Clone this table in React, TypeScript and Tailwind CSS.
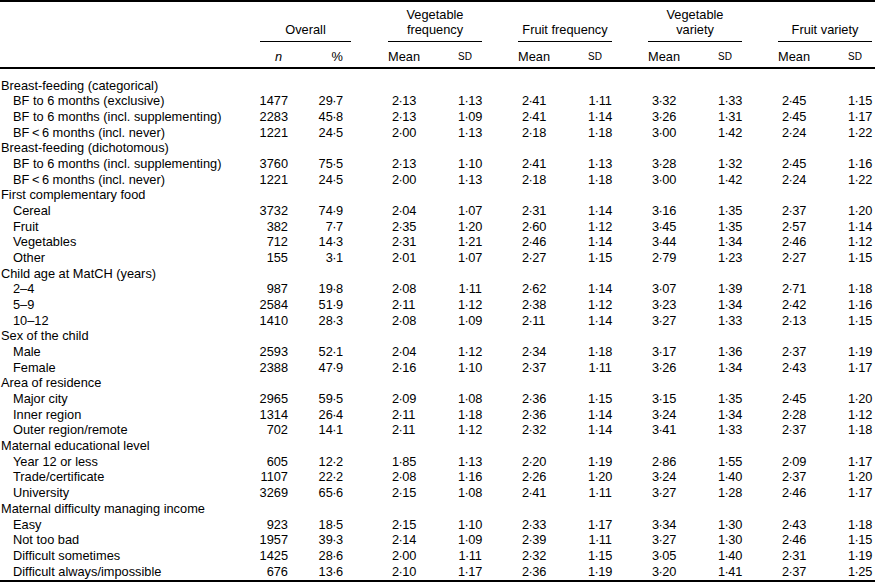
const rows: [string, string | null][] = [
  ["Breast-feeding (categorical)", null],
  ["BF to 6 months (exclusive)", "1477 29·7 2·13 1·13 2·41 1·11 3·32 1·33 2·45 1·15"],
  ["BF to 6 months (incl. supplementing)", "2283 45·8 2·13 1·09 2·41 1·14 3·26 1·31 2·45 1·17"],
  ["BF\u2009<\u20096 months (incl. never)", "1221 24·5 2·00 1·13 2·18 1·18 3·00 1·42 2·24 1·22"],
  ["Breast-feeding (dichotomous)", null],
  ["BF to 6 months (incl. supplementing)", "3760 75·5 2·13 1·10 2·41 1·13 3·28 1·32 2·45 1·16"],
  ["BF\u2009<\u20096 months (incl. never)", "1221 24·5 2·00 1·13 2·18 1·18 3·00 1·42 2·24 1·22"],
  ["First complementary food", null],
  ["Cereal", "3732 74·9 2·04 1·07 2·31 1·14 3·16 1·35 2·37 1·20"],
  ["Fruit", "382 7·7 2·35 1·20 2·60 1·12 3·45 1·35 2·57 1·14"],
  ["Vegetables", "712 14·3 2·31 1·21 2·46 1·14 3·44 1·34 2·46 1·12"],
  ["Other", "155 3·1 2·01 1·07 2·27 1·15 2·79 1·23 2·27 1·15"],
  ["Child age at MatCH (years)", null],
  ["2–4", "987 19·8 2·08 1·11 2·62 1·14 3·07 1·39 2·71 1·18"],
  ["5–9", "2584 51·9 2·11 1·12 2·38 1·12 3·23 1·34 2·42 1·16"],
  ["10–12", "1410 28·3 2·08 1·09 2·11 1·14 3·27 1·33 2·13 1·15"],
  ["Sex of the child", null],
  ["Male", "2593 52·1 2·04 1·12 2·34 1·18 3·17 1·36 2·37 1·19"],
  ["Female", "2388 47·9 2·16 1·10 2·37 1·11 3·26 1·34 2·43 1·17"],
  ["Area of residence", null],
  ["Major city", "2965 59·5 2·09 1·08 2·36 1·15 3·15 1·35 2·45 1·20"],
  ["Inner region", "1314 26·4 2·11 1·18 2·36 1·14 3·24 1·34 2·28 1·12"],
  ["Outer region/remote", "702 14·1 2·11 1·12 2·32 1·14 3·41 1·33 2·37 1·18"],
  ["Maternal educational level", null],
  ["Year 12 or less", "605 12·2 1·85 1·13 2·20 1·19 2·86 1·55 2·09 1·17"],
  ["Trade/certificate", "1107 22·2 2·08 1·16 2·26 1·20 3·24 1·40 2·37 1·20"],
  ["University", "3269 65·6 2·15 1·08 2·41 1·11 3·27 1·28 2·46 1·17"],
  ["Maternal difficulty managing income", null],
  ["Easy", "923 18·5 2·15 1·10 2·33 1·17 3·34 1·30 2·43 1·18"],
  ["Not too bad", "1957 39·3 2·14 1·09 2·39 1·11 3·27 1·30 2·46 1·15"],
  ["Difficult sometimes", "1425 28·6 2·00 1·11 2·32 1·15 3·05 1·40 2·31 1·19"],
  ["Difficult always/impossible", "676 13·6 2·10 1·17 2·36 1·19 3·20 1·41 2·37 1·25"],
];

const groups = [
  { title: ["Vegetable", "frequency"], gap: "w-[45px]" },
  { title: ["Fruit frequency"], gap: "w-[36px]" },
  { title: ["Vegetable", "variety"], gap: "w-[36px]" },
  { title: ["Fruit variety"], gap: "w-[36px]" },
];

// the middle dot sits tight against the digits in the source
function Num({ value }: { value: string }) {
  const [a, b] = value.split("·");
  if (b === undefined) return <>{a}</>;
  return (
    <>
      {a}
      <span className="mx-[-0.6px]">·</span>
      {b}
    </>
  );
}

function GroupTitle({ lines }: { lines: string[] }) {
  return (
    <div className="flex h-full w-[94px] flex-col justify-end border-b border-black pb-[3px] text-center">
      {lines.map((l) => (
        <div key={l}>{l}</div>
      ))}
    </div>
  );
}

export default function App() {
  return (
    <div
      className="h-[585px] w-[875px] overflow-hidden bg-white text-[12.8px] leading-[15.68px] text-black"
      style={{ fontFamily: '"Liberation Sans", Arial, sans-serif' }}
    >
      <div className="border-b-2 border-t-2 border-black">
        <div className="flex h-[40px] items-end">
          <div className="w-[260px]" />
          <div className="flex h-full w-[91px] flex-col justify-end border-b border-black pb-[3px] text-center">
            Overall
          </div>
          {groups.map((g, i) => (
            <div key={i} className="flex h-full">
              <div className={i === 0 ? "w-[37px]" : g.gap} />
              <GroupTitle lines={g.title} />
            </div>
          ))}
        </div>
        <div className="flex pb-[2px] pt-[7px]">
          <div className="w-[250px]" />
          <div className="w-[38px] pr-[6px] text-right italic">n</div>
          <div className="w-[55px] text-right">%</div>
          {groups.map((g, i) => (
            <div key={i} className="flex">
              <div className={g.gap} />
              <div className="w-[70px]">Mean</div>
              <div className="w-[24px] text-[10px]">SD</div>
            </div>
          ))}
        </div>
      </div>

      <div className="border-b-2 border-black pb-[1px] pt-[9px]">
        {rows.map(([label, data], r) => {
          if (!data) {
            return (
              <div key={r} className="h-[15.68px] pl-[1px]">
                {label}
              </div>
            );
          }
          const v = data.split(" ");
          return (
            <div key={r} className="flex h-[15.68px]">
              <div className="w-[250px] pl-[13px]">{label}</div>
              <div className="w-[38px] text-right">{v[0]}</div>
              <div className="w-[55px] text-right">
                <Num value={v[1]} />
              </div>
              {groups.map((g, i) => (
                <div key={i} className="flex">
                  <div className={g.gap} />
                  <div className="w-[70px] pl-[4px]">
                    <Num value={v[2 + i * 2]} />
                  </div>
                  <div className="w-[24px] text-right">
                    <Num value={v[3 + i * 2]} />
                  </div>
                </div>
              ))}
            </div>
          );
        })}
      </div>
    </div>
  );
}
